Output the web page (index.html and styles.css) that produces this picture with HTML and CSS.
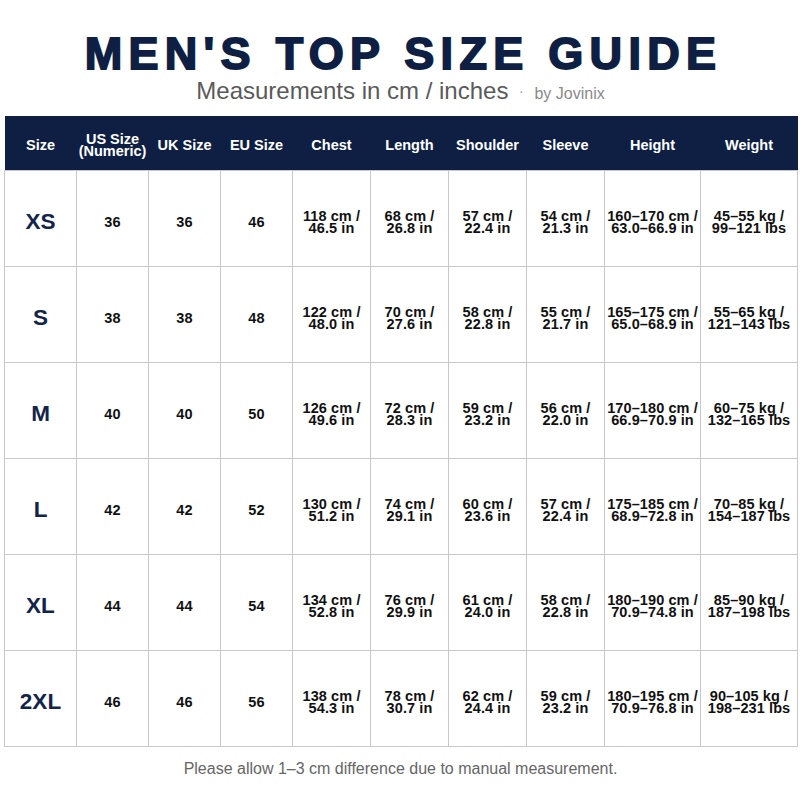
FILE: index.html
```html
<!DOCTYPE html>
<html lang="en">
<head>
<meta charset="utf-8">
<title>Men's Top Size Guide</title>
<link rel="stylesheet" href="styles.css">
</head>
<body>
<div class="page">
  <h1 class="title">MEN'S TOP SIZE GUIDE</h1>
  <p class="subtitle">Measurements in cm / inches <span class="dot">·</span> <span class="brand">by Jovinix</span></p>
  <table class="guide">
    <colgroup>
      <col class="c72"><col class="c72"><col class="c72"><col class="c72">
      <col class="c78"><col class="c78"><col class="c78"><col class="c78">
      <col class="c96"><col class="c97">
    </colgroup>
    <thead>
      <tr>
        <th>Size</th><th>US Size<br>(Numeric)</th><th>UK Size</th><th>EU Size</th>
        <th>Chest</th><th>Length</th><th>Shoulder</th><th>Sleeve</th><th>Height</th><th>Weight</th>
      </tr>
    </thead>
    <tbody>
      <tr>
        <td class="size">XS</td><td>36</td><td>36</td><td>46</td>
        <td>118 cm /<br>46.5 in</td><td>68 cm /<br>26.8 in</td><td>57 cm /<br>22.4 in</td><td>54 cm /<br>21.3 in</td>
        <td>160–170 cm /<br>63.0–66.9 in</td><td>45–55 kg /<br>99–121 lbs</td>
      </tr>
      <tr>
        <td class="size">S</td><td>38</td><td>38</td><td>48</td>
        <td>122 cm /<br>48.0 in</td><td>70 cm /<br>27.6 in</td><td>58 cm /<br>22.8 in</td><td>55 cm /<br>21.7 in</td>
        <td>165–175 cm /<br>65.0–68.9 in</td><td>55–65 kg /<br>121–143 lbs</td>
      </tr>
      <tr>
        <td class="size">M</td><td>40</td><td>40</td><td>50</td>
        <td>126 cm /<br>49.6 in</td><td>72 cm /<br>28.3 in</td><td>59 cm /<br>23.2 in</td><td>56 cm /<br>22.0 in</td>
        <td>170–180 cm /<br>66.9–70.9 in</td><td>60–75 kg /<br>132–165 lbs</td>
      </tr>
      <tr>
        <td class="size">L</td><td>42</td><td>42</td><td>52</td>
        <td>130 cm /<br>51.2 in</td><td>74 cm /<br>29.1 in</td><td>60 cm /<br>23.6 in</td><td>57 cm /<br>22.4 in</td>
        <td>175–185 cm /<br>68.9–72.8 in</td><td>70–85 kg /<br>154–187 lbs</td>
      </tr>
      <tr>
        <td class="size">XL</td><td>44</td><td>44</td><td>54</td>
        <td>134 cm /<br>52.8 in</td><td>76 cm /<br>29.9 in</td><td>61 cm /<br>24.0 in</td><td>58 cm /<br>22.8 in</td>
        <td>180–190 cm /<br>70.9–74.8 in</td><td>85–90 kg /<br>187–198 lbs</td>
      </tr>
      <tr>
        <td class="size">2XL</td><td>46</td><td>46</td><td>56</td>
        <td>138 cm /<br>54.3 in</td><td>78 cm /<br>30.7 in</td><td>62 cm /<br>24.4 in</td><td>59 cm /<br>23.2 in</td>
        <td>180–195 cm /<br>70.9–76.8 in</td><td>90–105 kg /<br>198–231 lbs</td>
      </tr>
    </tbody>
  </table>
  <p class="note">Please allow 1–3 cm difference due to manual measurement.</p>
</div>
</body>
</html>
```

FILE: styles.css
```css
html, body {
  margin: 0;
  padding: 0;
  background: #ffffff;
}

body {
  font-family: "Liberation Sans", Arial, sans-serif;
  color: #111111;
}

.page {
  padding: 31px 3px 0 4px;
}

.title {
  margin: 0;
  font-size: 45px;
  line-height: 45px;
  font-weight: 700;
  letter-spacing: 6.3px;
  text-align: center;
  color: #0e1f43;
  -webkit-text-stroke: 1.8px #0e1f43;
  padding-left: 6px;
}

.subtitle {
  margin: 3px 0 0;
  font-size: 24px;
  line-height: 24px;
  text-align: center;
  color: #5a5a5a;
}

.dot {
  font-size: 14px;
  color: #999999;
  vertical-align: 3px;
  margin: 0 4px;
}

.brand {
  font-size: 16px;
  color: #8a8a8a;
}

.guide {
  margin-top: 10px;
  border-collapse: collapse;
  table-layout: fixed;
  width: 794px;
}

.c72 { width: 72px; }
.c78 { width: 78px; }
.c96 { width: 96px; }
.c97 { width: 97px; }

.guide th {
  background: #0e1f43;
  color: #ffffff;
  font-size: 14.5px;
  line-height: 12px;
  font-weight: 700;
  height: 54px;
  padding: 5px 0 0;
  box-sizing: border-box;
  text-align: center;
  vertical-align: middle;
  border: none;
}

.guide td {
  border: 1px solid #c8c8c8;
  height: 96px;
  box-sizing: border-box;
  padding: 7px 0 0;
  text-align: center;
  vertical-align: middle;
  font-size: 14.5px;
  line-height: 12px;
  letter-spacing: 0.1px;
  font-weight: 700;
  color: #111111;
}

.guide td.size {
  font-size: 22.5px;
  line-height: 24px;
  letter-spacing: 0;
  color: #13244a;
}

.note {
  margin: 13px 0 0;
  font-size: 16px;
  line-height: 18px;
  text-align: center;
  color: #666666;
}
```
